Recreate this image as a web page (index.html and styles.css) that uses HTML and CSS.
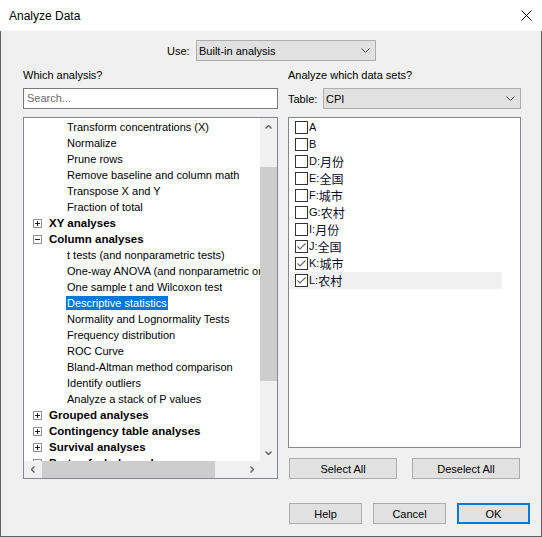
FILE: index.html
```html
<!DOCTYPE html>
<html>
<head>
<meta charset="utf-8">
<title>Analyze Data</title>
<link rel="stylesheet" href="styles.css">
</head>
<body>
<div class="window">
  <div class="titlebar">
    <span class="title">Analyze Data</span>
    <svg class="close" width="11" height="11" viewBox="0 0 11 11"><path d="M0.5 0.5L10.5 10.5M10.5 0.5L0.5 10.5" stroke="#000" stroke-width="1" fill="none"/></svg>
  </div>
  <div class="dialog">
    <div class="use-row">
      <span class="use-label">Use:</span>
      <div class="select use-select">
        <span>Built-in analysis</span>
        <svg width="9" height="5" viewBox="0 0 9 5"><polyline points="0.5,0.5 4.5,4.5 8.5,0.5" fill="none" stroke="#444" stroke-width="1"/></svg>
      </div>
    </div>

    <div class="columns">
      <div class="col">
        <div class="caption">Which analysis?</div>
        <div class="search">Search...</div>
        <div class="tree">
          <div class="tree-rows">
            <div class="node child"><span>Transform concentrations (X)</span></div>
            <div class="node child"><span>Normalize</span></div>
            <div class="node child"><span>Prune rows</span></div>
            <div class="node child"><span>Remove baseline and column math</span></div>
            <div class="node child"><span>Transpose X and Y</span></div>
            <div class="node child"><span>Fraction of total</span></div>
            <div class="node group">
              <svg class="toggle" width="9" height="9" viewBox="0 0 9 9"><rect x="0.5" y="0.5" width="8" height="8" fill="#fff" stroke="#919191"/><path d="M2 4.5H7M4.5 2V7" stroke="#1e1e3c"/></svg>
              <span>XY analyses</span>
            </div>
            <div class="node group">
              <svg class="toggle" width="9" height="9" viewBox="0 0 9 9"><rect x="0.5" y="0.5" width="8" height="8" fill="#fff" stroke="#919191"/><path d="M2 4.5H7" stroke="#1e1e3c"/></svg>
              <span>Column analyses</span>
            </div>
            <div class="node child"><span>t tests (and nonparametric tests)</span></div>
            <div class="node child"><span>One-way ANOVA (and nonparametric or mixed)</span></div>
            <div class="node child"><span>One sample t and Wilcoxon test</span></div>
            <div class="node child"><span class="selected">Descriptive statistics</span></div>
            <div class="node child"><span>Normality and Lognormality Tests</span></div>
            <div class="node child"><span>Frequency distribution</span></div>
            <div class="node child"><span>ROC Curve</span></div>
            <div class="node child"><span>Bland-Altman method comparison</span></div>
            <div class="node child"><span>Identify outliers</span></div>
            <div class="node child"><span>Analyze a stack of P values</span></div>
            <div class="node group">
              <svg class="toggle" width="9" height="9" viewBox="0 0 9 9"><rect x="0.5" y="0.5" width="8" height="8" fill="#fff" stroke="#919191"/><path d="M2 4.5H7M4.5 2V7" stroke="#1e1e3c"/></svg>
              <span>Grouped analyses</span>
            </div>
            <div class="node group">
              <svg class="toggle" width="9" height="9" viewBox="0 0 9 9"><rect x="0.5" y="0.5" width="8" height="8" fill="#fff" stroke="#919191"/><path d="M2 4.5H7M4.5 2V7" stroke="#1e1e3c"/></svg>
              <span>Contingency table analyses</span>
            </div>
            <div class="node group">
              <svg class="toggle" width="9" height="9" viewBox="0 0 9 9"><rect x="0.5" y="0.5" width="8" height="8" fill="#fff" stroke="#919191"/><path d="M2 4.5H7M4.5 2V7" stroke="#1e1e3c"/></svg>
              <span>Survival analyses</span>
            </div>
            <div class="node group">
              <svg class="toggle" width="9" height="9" viewBox="0 0 9 9"><rect x="0.5" y="0.5" width="8" height="8" fill="#fff" stroke="#919191"/><path d="M2 4.5H7M4.5 2V7" stroke="#1e1e3c"/></svg>
              <span>Parts of whole analyses</span>
            </div>
          </div>
          <div class="vscroll">
            <div class="arrow">
              <svg width="7" height="4" viewBox="0 0 7 4"><polyline points="0.5,3.5 3.5,0.5 6.5,3.5" fill="none" stroke="#606060" stroke-width="1.4"/></svg>
            </div>
            <div class="vtrack"><div class="vthumb"></div></div>
            <div class="arrow">
              <svg width="7" height="4" viewBox="0 0 7 4"><polyline points="0.5,0.5 3.5,3.5 6.5,0.5" fill="none" stroke="#606060" stroke-width="1.4"/></svg>
            </div>
          </div>
          <div class="hscroll">
            <div class="arrow">
              <svg width="4" height="7" viewBox="0 0 4 7"><polyline points="3.5,0.5 0.5,3.5 3.5,6.5" fill="none" stroke="#606060" stroke-width="1.4"/></svg>
            </div>
            <div class="htrack"><div class="hthumb"></div></div>
            <div class="arrow">
              <svg width="4" height="7" viewBox="0 0 4 7"><polyline points="0.5,0.5 3.5,3.5 0.5,6.5" fill="none" stroke="#606060" stroke-width="1.4"/></svg>
            </div>
          </div>
          <div class="corner"></div>
        </div>
      </div>

      <div class="col">
        <div class="caption">Analyze which data sets?</div>
        <div class="table-row">
          <span class="table-label">Table:</span>
          <div class="select table-select">
            <span>CPI</span>
            <svg width="9" height="5" viewBox="0 0 9 5"><polyline points="0.5,0.5 4.5,4.5 8.5,0.5" fill="none" stroke="#444" stroke-width="1"/></svg>
          </div>
        </div>
        <div class="checklist">
          <div class="item"><span class="box"></span><span class="lbl">A</span></div>
          <div class="item"><span class="box"></span><span class="lbl">B</span></div>
          <div class="item"><span class="box"></span><span class="lbl">D:<span class="cn">月份</span></span></div>
          <div class="item"><span class="box"></span><span class="lbl">E:<span class="cn">全国</span></span></div>
          <div class="item"><span class="box"></span><span class="lbl">F:<span class="cn">城市</span></span></div>
          <div class="item"><span class="box"></span><span class="lbl">G:<span class="cn">农村</span></span></div>
          <div class="item"><span class="box"></span><span class="lbl">I:<span class="cn">月份</span></span></div>
          <div class="item"><span class="box"><svg width="11" height="11" viewBox="0 0 11 11"><polyline points="1.5,5.5 4,8 9.5,2.5" fill="none" stroke="#6b6b6b" stroke-width="1.2"/></svg></span><span class="lbl">J:<span class="cn">全国</span></span></div>
          <div class="item"><span class="box"><svg width="11" height="11" viewBox="0 0 11 11"><polyline points="1.5,5.5 4,8 9.5,2.5" fill="none" stroke="#6b6b6b" stroke-width="1.2"/></svg></span><span class="lbl">K:<span class="cn">城市</span></span></div>
          <div class="item hot"><span class="box"><svg width="11" height="11" viewBox="0 0 11 11"><polyline points="1.5,5.5 4,8 9.5,2.5" fill="none" stroke="#6b6b6b" stroke-width="1.2"/></svg></span><span class="lbl">L:<span class="cn">农村</span></span></div>
        </div>
        <div class="sel-buttons">
          <button class="btn wide">Select All</button>
          <button class="btn wide">Deselect All</button>
        </div>
      </div>
    </div>

    <div class="footer">
      <button class="btn">Help</button>
      <button class="btn">Cancel</button>
      <button class="btn default">OK</button>
    </div>
  </div>
</div>
</body>
</html>
```

FILE: styles.css
```css
* {
  box-sizing: border-box;
}

html,
body {
  margin: 0;
  padding: 0;
}

body {
  background: #f0f0f0;
  font-family: "Liberation Sans", Arial, sans-serif;
  font-size: 11px;
  color: #000;
}

.window {
  width: 542px;
  height: 537px;
  display: flex;
  flex-direction: column;
  background: #f0f0f0;
}

/* title bar */
.titlebar {
  flex: none;
  height: 31px;
  background: #fff;
  display: flex;
  align-items: center;
  justify-content: space-between;
  padding: 0 10px 0 9px;
}

.title {
  font-size: 12px;
}

.close {
  display: block;
}

/* dialog client area */
.dialog {
  flex: 1;
  display: flex;
  flex-direction: column;
  border: 1px solid #606060;
  border-top: none;
}

.use-row {
  display: flex;
  align-items: center;
  height: 21px;
  margin-top: 9px;
  padding-left: 166px;
}

.use-label {
  width: 29px;
}

.select {
  display: flex;
  align-items: center;
  justify-content: space-between;
  height: 21px;
  background: #e1e1e1;
  border: 1px solid #adadad;
  padding: 0 5px 0 2px;
}

.select svg {
  display: block;
}

.use-select {
  width: 180px;
}

.columns {
  display: grid;
  grid-template-columns: 255px 233px;
  column-gap: 10px;
  margin-top: 7px;
  padding: 0 20px 0 22px;
}

.col {
  display: flex;
  flex-direction: column;
}

.caption {
  height: 15px;
  line-height: 15px;
  margin-bottom: 5px;
}

.search {
  height: 21px;
  background: #fff;
  border: 1px solid #7a7a7a;
  padding-left: 3px;
  line-height: 19px;
  color: #6d6d6d;
}

/* analysis tree */
.tree {
  height: 362px;
  margin-top: 8px;
  background: #fff;
  border: 1px solid #828790;
  display: grid;
  grid-template-columns: 236px 17px;
  grid-template-rows: 343px 17px;
}

.tree-rows {
  overflow: hidden;
  padding-top: 1px;
  white-space: nowrap;
}

.node {
  height: 16px;
  display: flex;
  align-items: center;
}

.node.child {
  padding-left: 42px;
}

.node.child span {
  padding: 0 1px;
  line-height: 14px;
}

.node.child .selected {
  background: #0078d7;
  color: #fff;
}

.node.group {
  padding-left: 9px;
  font-weight: bold;
  font-size: 11.5px;
}

.toggle {
  display: block;
  flex: none;
  margin-right: 7px;
}

.vscroll {
  background: #f0f0f0;
  display: flex;
  flex-direction: column;
}

.arrow {
  flex: none;
  width: 17px;
  height: 17px;
  display: flex;
  align-items: center;
  justify-content: center;
}

.arrow svg {
  display: block;
}

.vtrack {
  flex: 1;
  padding-top: 32px;
}

.vthumb {
  width: 17px;
  height: 214px;
  background: #cdcdcd;
}

.hscroll {
  background: #f0f0f0;
  display: flex;
}

.htrack {
  flex: 1;
  padding-left: 1px;
}

.hthumb {
  width: 173px;
  height: 17px;
  background: #cdcdcd;
}

.corner {
  background: #f0f0f0;
}

/* data set list */
.table-row {
  display: flex;
  align-items: center;
  height: 21px;
}

.table-label {
  width: 35px;
}

.table-select {
  width: 198px;
}

.checklist {
  height: 331px;
  margin-top: 8px;
  background: #fff;
  border: 1px solid #828790;
  padding-top: 1px;
}

.item {
  width: 212px;
  height: 17px;
  margin-left: 1px;
  padding-left: 5px;
  display: flex;
  align-items: center;
  font-size: 11px;
}

.item.hot {
  background: #f0f0f0;
}

.box {
  flex: none;
  width: 13px;
  height: 13px;
  background: #fff;
  border: 1px solid #333;
  margin-right: 1px;
}

.box svg {
  display: block;
}

.lbl {
  display: flex;
  align-items: center;
  height: 13px;
  line-height: 13px;
  color: #0a0a1e;
}

.cn {
  font-family: "Noto Sans CJK SC", sans-serif;
  font-size: 12px;
  line-height: 13px;
}

.sel-buttons {
  display: flex;
  gap: 15px;
  margin-top: 10px;
  padding: 0 1px;
}

/* push buttons */
.btn {
  width: 73px;
  height: 21px;
  padding: 0;
  margin: 0;
  background: #e1e1e1;
  border: 1px solid #adadad;
  font-family: "Liberation Sans", Arial, sans-serif;
  font-size: 11px;
  color: #000;
}

.btn.wide {
  width: 108px;
}

.btn.default {
  border: 2px solid #0078d7;
}

.footer {
  margin-top: auto;
  display: flex;
  justify-content: flex-end;
  gap: 11px;
  padding: 0 11px 12px 0;
}
```
